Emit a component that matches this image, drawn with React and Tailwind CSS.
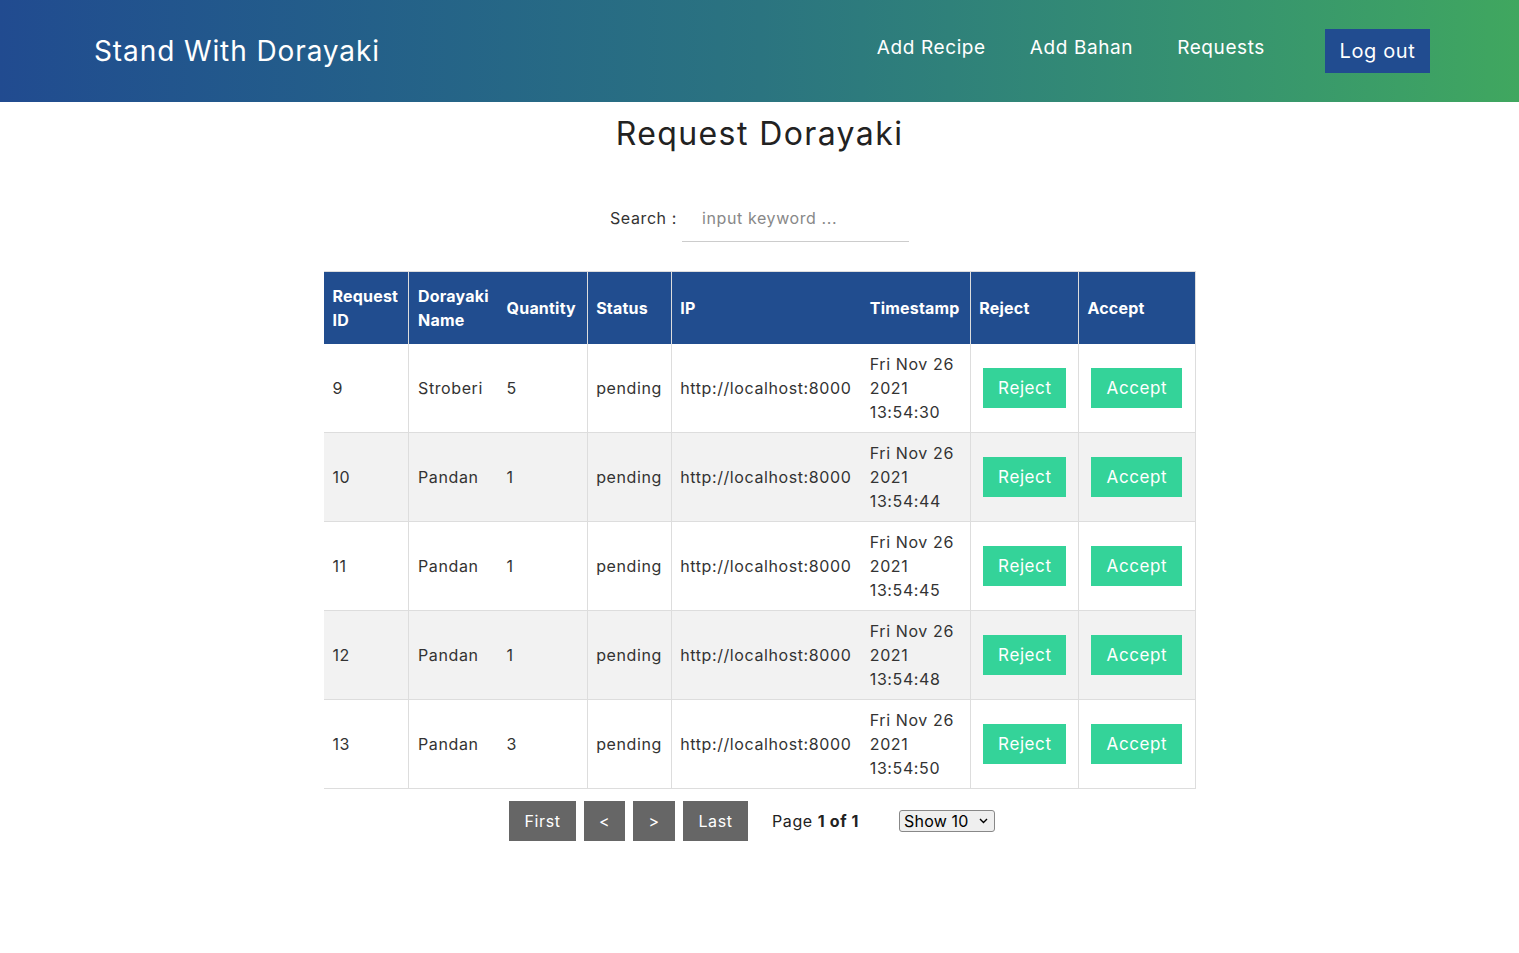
import React from "react";

const rows = [
  { id: 9, name: "Stroberi", qty: 5, ts: "13:54:30", bg: "bg-white" },
  { id: 10, name: "Pandan", qty: 1, ts: "13:54:44", bg: "bg-[#f2f2f2]" },
  { id: 11, name: "Pandan", qty: 1, ts: "13:54:45", bg: "bg-white" },
  { id: 12, name: "Pandan", qty: 1, ts: "13:54:48", bg: "bg-[#f2f2f2]" },
  { id: 13, name: "Pandan", qty: 3, ts: "13:54:50", bg: "bg-white" },
];

export default function App() {
  return (
    <div className="min-h-screen bg-white text-[#222] tracking-[0.6px]" style={{ fontFamily: "Inter, 'Open Sans', sans-serif" }}>
      <header className="h-[102px] flex items-center pl-[94px] pr-[89px] bg-gradient-to-r from-[#214b90] via-[#2b7480] to-[#40a75f] text-white">
        <div className="text-[28px] tracking-[0.9px] flex-1">Stand With Dorayaki</div>
        <nav className="flex items-center text-[19px]">
          <a className="mr-[44px] -mt-[6px]">Add Recipe</a>
          <a className="mr-[44px] -mt-[6px]">Add Bahan</a>
          <a className="mr-[60px] -mt-[6px]">Requests</a>
          <button className="w-[105px] h-[44px] bg-[#214c90] text-[20px] text-white">Log out</button>
        </nav>
      </header>

      <h1 className="text-center text-[32px] leading-[40px] mt-[12px] text-[#222] tracking-[1.4px]">Request Dorayaki</h1>

      <div className="flex justify-center items-center mt-[40px] text-[16px]">
        <span className="mr-[5px] text-[#333]">Search :</span>
        <input
          className="w-[227px] h-[48px] border-b border-[#ccc] pl-[20px] outline-none placeholder:text-[#888] text-[16px] tracking-[0.6px]"
          placeholder="input keyword ..."
        />
      </div>

      <div className="flex justify-center mt-[29px]">
        <table className="border-collapse text-[16px] leading-[24px] text-[#333]" style={{ width: 872 }}>
          <thead>
            <tr className="bg-[#214d8f] text-white font-bold text-left">
              <th className="w-[85px] px-[9px] py-[12px] border-r border-t border-[#ddd] font-bold tracking-[0.2px]">Request ID</th>
              <th className="w-[90px] px-[9px] py-[12px] border-t border-[#ddd] font-bold tracking-[0.2px]">Dorayaki Name</th>
              <th className="w-[89px] px-[8px] py-[12px] border-r border-t border-[#ddd] font-bold tracking-[0.2px]">Quantity</th>
              <th className="w-[84px] px-[8px] py-[12px] border-r border-t border-[#ddd] font-bold tracking-[0.2px]">Status</th>
              <th className="w-[190px] px-[8px] py-[12px] border-t border-[#ddd] font-bold tracking-[0.2px]">IP</th>
              <th className="w-[109px] px-[8px] py-[12px] border-r border-t border-[#ddd] font-bold tracking-[0.2px]">Timestamp</th>
              <th className="w-[108px] px-[8px] py-[12px] border-r border-t border-[#ddd] font-bold tracking-[0.2px]">Reject</th>
              <th className="w-[116px] px-[8px] py-[12px] border-r border-t border-[#ddd] font-bold tracking-[0.2px]">Accept</th>
            </tr>
          </thead>
          <tbody>
            {rows.map((r) => (
              <tr key={r.id} className={`${r.bg} border-b border-[#ddd]`}>
                <td className="px-[9px] py-[8px] border-r border-[#ddd]">{r.id}</td>
                <td className="px-[9px] py-[8px]">{r.name}</td>
                <td className="px-[8px] py-[8px] border-r border-[#ddd]">{r.qty}</td>
                <td className="px-[8px] py-[8px] border-r border-[#ddd]">pending</td>
                <td className="px-[8px] py-[8px]">http://localhost:8000</td>
                <td className="px-[8px] py-[8px] border-r border-[#ddd]">
                  Fri Nov 26
                  <br />
                  2021
                  <br />
                  {r.ts}
                </td>
                <td className="px-[8px] py-[8px] border-r border-[#ddd] text-center">
                  <button className="w-[83px] h-[40px] bg-[#34d399] text-white text-[17px]">Reject</button>
                </td>
                <td className="px-[8px] py-[8px] border-r border-[#ddd] text-center">
                  <button className="w-[91px] h-[40px] bg-[#34d399] text-white text-[17px]">Accept</button>
                </td>
              </tr>
            ))}
          </tbody>
        </table>
      </div>

      <div className="flex justify-center items-center mt-[12px] pr-[15px] text-[16px]">
        <button className="w-[67px] h-[40px] bg-[#666] text-white">First</button>
        <button className="w-[41px] h-[40px] bg-[#666] text-white ml-[8px]">&lt;</button>
        <button className="w-[42px] h-[40px] bg-[#666] text-white ml-[8px]">&gt;</button>
        <button className="w-[65px] h-[40px] bg-[#666] text-white ml-[8px]">Last</button>
        <span className="ml-[24px] text-[#222]">
          Page <strong>1 of 1</strong>
        </span>
        <div className="ml-[40px] w-[96px] h-[22px] border border-[#888] rounded-[3px] bg-[#efefef] flex items-center pl-[4px] text-[16px] text-black tracking-[0.2px]">
          <span>Show 10</span>
          <svg className="ml-auto mr-[6px]" width="9" height="6" viewBox="0 0 9 6">
            <path d="M1 1 L4.5 4.5 L8 1" stroke="#000" strokeWidth="1.4" fill="none" />
          </svg>
        </div>
      </div>
    </div>
  );
}
